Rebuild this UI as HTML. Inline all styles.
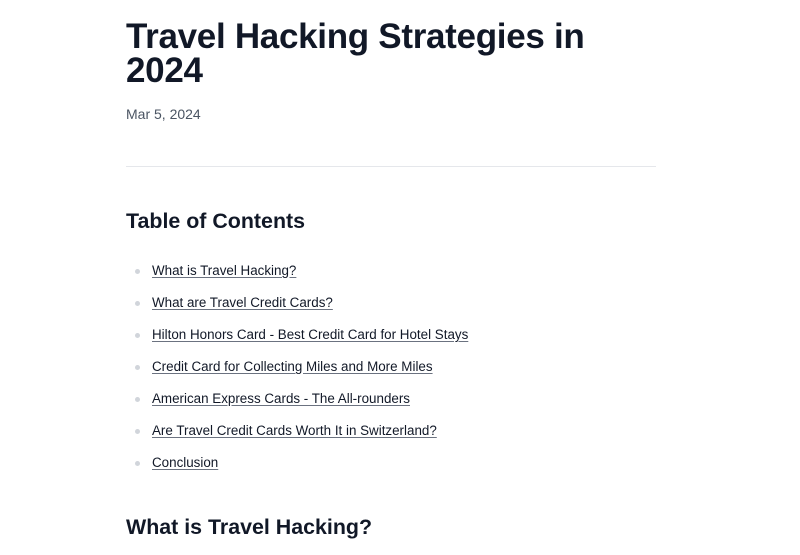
<!DOCTYPE html>
<html><head><meta charset="utf-8"><style>
body{margin:0;background:#fff;font-family:"Liberation Sans",sans-serif;color:#111827;}
h1{position:absolute;left:126px;top:20px;margin:0;font-size:35px;line-height:34px;font-weight:700;letter-spacing:-0.3px;color:#111827;width:480px}
.date{position:absolute;left:126px;top:106px;font-size:14px;color:#4b5563}
.hr{position:absolute;left:126px;top:166px;width:530px;height:1px;background:#e5e7eb}
h2{position:absolute;left:126px;margin:0;font-size:21.4px;font-weight:700;color:#111827}
ul{position:absolute;left:126px;top:262px;margin:0;padding:0;list-style:none}
li{position:relative;height:32px;padding-left:26px;font-size:13.4px;line-height:17px}
li:before{content:"";position:absolute;left:9px;top:7px;width:5px;height:5px;border-radius:50%;background:#d1d5db}
a{color:#111827;text-decoration:underline;text-decoration-color:#6b7280;text-underline-offset:2px}
</style></head><body>
<h1>Travel Hacking Strategies in 2024</h1>
<div class="date">Mar 5, 2024</div>
<div class="hr"></div>
<h2 style="top:209px">Table of Contents</h2>
<ul>
<li><a>What is Travel Hacking?</a></li>
<li><a>What are Travel Credit Cards?</a></li>
<li><a>Hilton Honors Card - Best Credit Card for Hotel Stays</a></li>
<li><a>Credit Card for Collecting Miles and More Miles</a></li>
<li><a>American Express Cards - The All-rounders</a></li>
<li><a>Are Travel Credit Cards Worth It in Switzerland?</a></li>
<li><a>Conclusion</a></li>
</ul>
<h2 style="top:515px">What is Travel Hacking?</h2>
</body></html>
